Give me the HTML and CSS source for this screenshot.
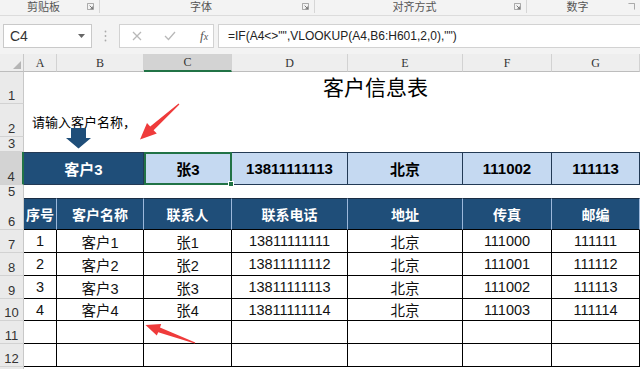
FILE: index.html
```html
<!DOCTYPE html>
<html lang="zh">
<head>
<meta charset="utf-8">
<title>客户信息表</title>
<link rel="stylesheet" href="styles.css">
</head>
<body>
<div class="ribbon">
  <div class="group g1"><span class="glabel">剪贴板</span><svg class="launch" viewBox="0 0 8 8"><path d="M0.5 0.5H7.5V7.5H0.5Z" fill="none" stroke="#9a9a9a"/><path d="M3 3L6.5 6.5M6.5 4V6.5H4" fill="none" stroke="#666"/></svg></div>
  <div class="group g2"><span class="glabel">字体</span><svg class="launch" viewBox="0 0 8 8"><path d="M0.5 0.5H7.5V7.5H0.5Z" fill="none" stroke="#9a9a9a"/><path d="M3 3L6.5 6.5M6.5 4V6.5H4" fill="none" stroke="#666"/></svg></div>
  <div class="group g3"><span class="glabel">对齐方式</span><svg class="launch" viewBox="0 0 8 8"><path d="M0.5 0.5H7.5V7.5H0.5Z" fill="none" stroke="#9a9a9a"/><path d="M3 3L6.5 6.5M6.5 4V6.5H4" fill="none" stroke="#666"/></svg></div>
  <div class="group g4"><span class="glabel">数字</span><svg class="launch" viewBox="0 0 8 8"><path d="M0.5 0.5H7.5V7.5" fill="none" stroke="#9a9a9a"/></svg></div>
</div>

<div class="fbar">
  <div class="namebox"><span class="nbtext">C4</span><svg class="caret" viewBox="0 0 7 4"><path d="M0 0H7L3.5 4Z" fill="#666"/></svg></div>
  <div class="dots"><svg viewBox="0 0 3 12" width="3" height="12"><circle cx="1.5" cy="1.5" r="0.9" fill="#aaa"/><circle cx="1.5" cy="6" r="0.9" fill="#aaa"/><circle cx="1.5" cy="10.5" r="0.9" fill="#aaa"/></svg></div>
  <div class="btns">
    <svg class="bx" viewBox="0 0 10 10"><path d="M1 1L9 9M9 1L1 9" stroke="#b8b8b8" stroke-width="1.3"/></svg>
    <svg class="bx" viewBox="0 0 12 10"><path d="M1 5L4.5 8.5L11 1" fill="none" stroke="#b8b8b8" stroke-width="1.3"/></svg>
    <span class="fx"><i>f</i><i class="x">x</i></span>
  </div>
  <div class="formula">=IF(A4&lt;&gt;"",VLOOKUP(A4,B6:H601,2,0),"")</div>
</div>

<div class="sheet">
  <div class="row colhead">
    <div class="corner"><svg viewBox="0 0 8 8" width="8" height="8"><path d="M8 0V8H0Z" fill="#b5b5b5"/></svg></div>
    <div class="ch">A</div><div class="ch">B</div><div class="ch sel">C</div><div class="ch">D</div><div class="ch">E</div><div class="ch">F</div><div class="ch">G</div>
  </div>
  <div class="row h32"><div class="rh">1</div><div class="span7 title">客户信息表</div></div>
  <div class="row h33"><div class="rh">2</div><div class="span7 hint">请输入客户名称，</div></div>
  <div class="row h15"><div class="rh">3</div><div class="span7"></div></div>
  <div class="row h33 query">
    <div class="rh rsel">4</div>
    <div class="q dark span2">客户3</div>
    <div class="q light active">张3<span class="handle"></span></div>
    <div class="q light">13811111113</div>
    <div class="q light">北京</div>
    <div class="q light">111002</div>
    <div class="q light">111113</div>
  </div>
  <div class="row h13"><div class="rh">5</div><div class="span7"></div></div>
  <div class="row h32 thead">
    <div class="rh">6</div>
    <div class="th first">序号</div><div class="th">客户名称</div><div class="th">联系人</div><div class="th">联系电话</div><div class="th">地址</div><div class="th">传真</div><div class="th">邮编</div>
  </div>
  <div class="row h23 tr"><div class="rh">7</div><div class="td first">1</div><div class="td">客户1</div><div class="td">张1</div><div class="td">13811111111</div><div class="td">北京</div><div class="td">111000</div><div class="td">111111</div></div>
  <div class="row h23 tr"><div class="rh">8</div><div class="td first">2</div><div class="td">客户2</div><div class="td">张2</div><div class="td">13811111112</div><div class="td">北京</div><div class="td">111001</div><div class="td">111112</div></div>
  <div class="row h23 tr"><div class="rh">9</div><div class="td first">3</div><div class="td">客户3</div><div class="td">张3</div><div class="td">13811111113</div><div class="td">北京</div><div class="td">111002</div><div class="td">111113</div></div>
  <div class="row h22 tr"><div class="rh">10</div><div class="td first">4</div><div class="td">客户4</div><div class="td">张4</div><div class="td">13811111114</div><div class="td">北京</div><div class="td">111003</div><div class="td">111114</div></div>
  <div class="row h23 tr"><div class="rh">11</div><div class="td first"></div><div class="td"></div><div class="td"></div><div class="td"></div><div class="td"></div><div class="td"></div><div class="td"></div></div>
  <div class="row h23 tr"><div class="rh">12</div><div class="td first"></div><div class="td"></div><div class="td"></div><div class="td"></div><div class="td"></div><div class="td"></div><div class="td"></div></div>
  <div class="row h2"><div class="rh"></div><div class="span7"></div></div>
</div>

<svg class="overlay" width="640" height="369" viewBox="0 0 640 369">
  <path d="M71 128H86V138H91L78.5 148.5L66 138H71Z" fill="#1f4e79"/>
  <path d="M179.4 104.4L153.6 130.2L156.8 133.6L140 139.5L147 123L150.2 126.4L178.6 103.6Z" fill="#ef3b3b"/>
  <path d="M195.3 342.6L160 327.5L161.2 323.9L145.5 325L156.8 335.6L158.2 332.2L194.7 343.4Z" fill="#ef3b3b"/>
</svg>
</body>
</html>
```

FILE: styles.css
```css
* { box-sizing: border-box; }
body {
  margin: 0;
  width: 640px;
  height: 369px;
  overflow: hidden;
  position: relative;
  background: #fff;
  font-family: "Liberation Sans", "Noto Sans CJK SC", sans-serif;
  color: #000;
}

/* ribbon group labels */
.ribbon {
  display: flex;
  height: 16px;
  background: #f3f3f3;
  border-bottom: 1px solid #dcdcdc;
  font-size: 11px;
  color: #555;
}
.group {
  display: flex;
  align-items: center;
  border-right: 1px solid #d6d6d6;
  margin: 0 0 2px;
}
.g1 { width: 100px; }
.g2 { width: 215px; }
.g3 { width: 212px; }
.g4 { flex: 1; border-right: none; }
.glabel { flex: 1; text-align: center; line-height: 14px; }
.launch { width: 7px; height: 7px; margin-right: 5px; }

/* formula bar */
.fbar {
  display: flex;
  align-items: flex-start;
  height: 38px;
  padding-top: 8px;
  background: #f3f3f3;
}
.namebox {
  display: flex;
  align-items: center;
  margin-left: 3px;
  width: 89px;
  height: 24px;
  background: #fff;
  border: 1px solid #c9c9c9;
  padding-left: 6px;
  font-size: 14px;
  color: #333;
}
.nbtext { flex: 1; }
.caret { width: 7px; height: 4px; margin-right: 6px; }
.dots {
  width: 27px;
  height: 24px;
  display: flex;
  align-items: center;
  justify-content: center;
}
.btns {
  display: flex;
  align-items: center;
  width: 95px;
  height: 24px;
  background: #fff;
  border: 1px solid #d2d2d2;
  padding-left: 12px;
}
.bx { width: 10px; height: 10px; margin-right: 22px; }
.bx + .bx { width: 12px; margin-right: 24px; }
.fx {
  font-family: "Liberation Serif", serif;
  font-size: 13px;
  color: #555;
}
.fx .x { font-size: 10px; }
.formula {
  flex: 1;
  margin-left: 4px;
  height: 24px;
  background: #fff;
  border: 1px solid #d2d2d2;
  border-right: none;
  padding-left: 9px;
  display: flex;
  align-items: center;
  font-size: 12px;
  color: #222;
}

/* sheet */
.sheet { display: flex; flex-direction: column; }
.row {
  display: grid;
  grid-template-columns: 24px 33px 87px 88px 116px 115px 89px 88px;
}
.h2 { height: 2px; }
.h13 { height: 13px; }
.h15 { height: 15px; }
.h22 { height: 22px; }
.h23 { height: 23px; }
.h32 { height: 32px; }
.h33 { height: 33px; }

.colhead { height: 18px; }
.corner {
  background: #eeeeee;
  border-right: 1px solid #c8c8c8;
  border-bottom: 1px solid #bdbdbd;
  display: flex;
  align-items: flex-end;
  justify-content: flex-end;
  padding: 0 2px 2px 0;
}
.ch {
  background: #eeeeee;
  border-right: 1px solid #d2d2d2;
  border-bottom: 1px solid #bdbdbd;
  font-family: "Liberation Serif", serif;
  font-size: 12px;
  color: #333;
  display: flex;
  align-items: center;
  justify-content: center;
  padding-top: 1px;
}
.ch.sel {
  background: #d3d3d3;
  border-bottom: 2px solid #217346;
}

.rh {
  background: #eaeaea;
  border-right: 1px solid #c8c8c8;
  border-bottom: 1px solid #d2d2d2;
  font-size: 13px;
  color: #333;
  display: flex;
  align-items: flex-end;
  justify-content: center;
  line-height: 13px;
  padding-bottom: 1px;
}
.h2 .rh { border-bottom: none; }
.rh.rsel {
  background: #d3d3d3;
  border-right: 2px solid #217346;
}

.span7 { grid-column: span 7; }
.span2 { grid-column: span 2; }

.title {
  display: flex;
  align-items: flex-end;
  padding: 0 0 5px 299px;
  font-size: 21px;
  line-height: 22px;
}
.hint {
  display: flex;
  align-items: flex-end;
  padding: 0 0 7px 8px;
  font-size: 13px;
  line-height: 14px;
}

/* query row */
.q {
  display: flex;
  align-items: center;
  justify-content: center;
  font-weight: bold;
  font-size: 15px;
  border-top: 1px solid #233a55;
  border-bottom: 1px solid #233a55;
  border-right: 1px solid #233a55;
}
.q.dark { background: #1f4e79; color: #fff; }
.q.light { background: #c5d9f1; color: #000; }
.q.active {
  position: relative;
  border: 2px solid #217346;
}
.handle {
  position: absolute;
  right: -4px;
  bottom: -4px;
  width: 6px;
  height: 6px;
  background: #217346;
  border: 1px solid #fff;
}

/* data table */
.th, .td {
  display: flex;
  align-items: center;
  justify-content: center;
  font-size: 14px;
}
.td { font-size: 14.5px; }
.th {
  background: #1f4e79;
  color: #fff;
  font-weight: bold;
  border-top: 1px solid #1a2d44;
  border-right: 1px solid #9cb8db;
  border-bottom: 1px solid #000;
}
.td {
  border-right: 1px solid #000;
  border-bottom: 1px solid #000;
  color: #111;
}

.overlay {
  position: absolute;
  left: 0;
  top: 0;
  pointer-events: none;
}
```
